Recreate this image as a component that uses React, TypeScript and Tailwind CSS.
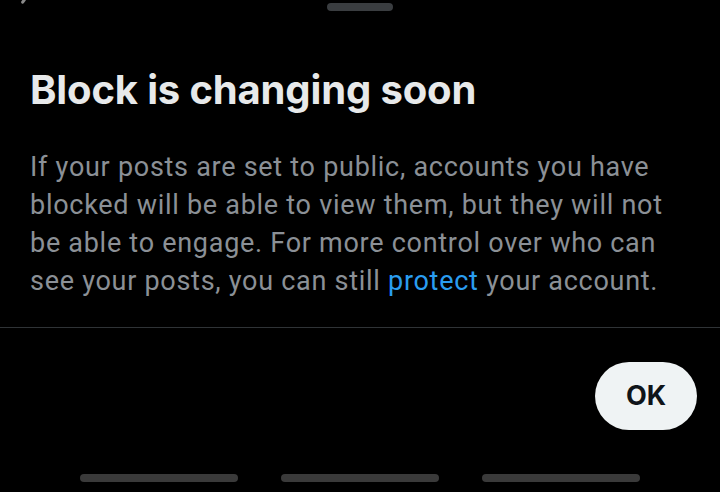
export default function App() {
  return (
    <div className="relative w-[720px] h-[492px] overflow-hidden bg-black">
      {/* leftover status bar glyph in the corner */}
      <div className="absolute left-[22px] -top-[2px] h-[6px] w-[3px] rotate-[35deg] rounded-sm bg-[#8a8a8a]" />

      <div className="mx-auto mt-[3px] h-2 w-[66px] rounded-full bg-[#3a3d40]" />

      <div className="px-[30px]">
        <h1 className="mt-[55px] text-[40px] leading-[48px] font-bold text-[#e7e9ea] tracking-[-0.15px] [font-family:Inter,'Noto_Sans',sans-serif]">
          Block is changing soon
        </h1>
        <p className="mt-[34px] text-[27px] leading-[38px] tracking-[0.72px] text-[#8b9096] whitespace-nowrap [font-family:Roboto,'Liberation_Sans',sans-serif]">
          If your posts are set to public, accounts you have
          <br />
          blocked will be able to view them, but they will not
          <br />
          be able to engage. For more control over who can
          <br />
          see your posts, you can still{' '}
          <a className="text-[#2a9df0]">protect</a> your account.
        </p>
      </div>

      <div className="mt-[27px] h-px bg-[#2f3336]" />

      <div className="mt-[34px] flex justify-end pr-[23px]">
        <button className="flex h-[68px] w-[102px] items-center justify-center rounded-full bg-[#eff3f4] text-[27px] font-bold text-[#0f1419] [font-family:Inter,sans-serif]">
          OK
        </button>
      </div>

      <div className="mt-[44px] flex justify-center gap-[43px] pr-[1px]">
        <div className="h-2 w-[158px] rounded-full bg-[#3a3a3a]" />
        <div className="h-2 w-[158px] rounded-full bg-[#3a3a3a]" />
        <div className="h-2 w-[158px] rounded-full bg-[#3a3a3a]" />
      </div>
    </div>
  );
}
